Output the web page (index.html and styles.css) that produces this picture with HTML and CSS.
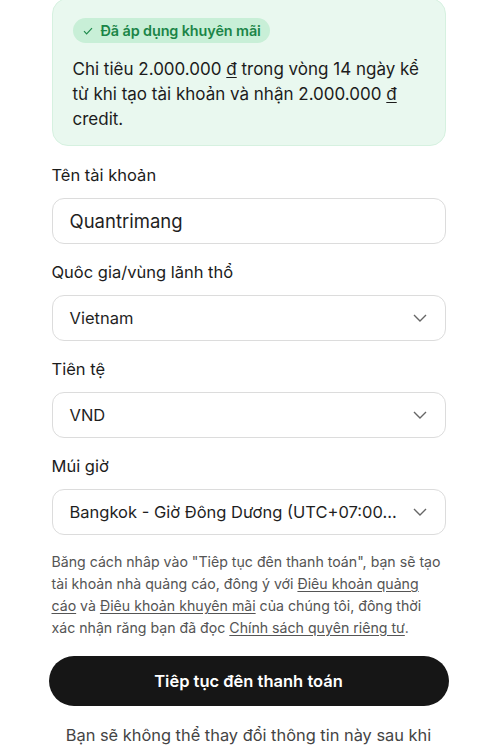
FILE: index.html
```html
<!DOCTYPE html>
<html lang="vi">
<head>
<meta charset="utf-8">
<link rel="stylesheet" href="styles.css">
</head>
<body>
<div class="page">
  <div class="promo">
    <span class="badge"><svg class="check" viewBox="0 0 10 8" width="10" height="8"><path d="M1 4.2 L3.6 6.8 L9 1.2" fill="none" stroke="#1f8a4c" stroke-width="1.2"/></svg>Đã áp dụng khuyên mãi</span>
    <p class="promo-text">Chi tiêu 2.000.000 <u>đ</u> trong vòng 14 ngày kể từ khi tạo tài khoản và nhận 2.000.000 <u>đ</u> credit.</p>
  </div>

  <div class="field">
    <div class="label">Tên tài khoản</div>
    <div class="input input-text">Quantrimang</div>
  </div>
  <div class="field">
    <div class="label">Quôc gia/vùng lãnh thổ</div>
    <div class="input select"><span class="val">Vietnam</span><svg class="chev" viewBox="0 0 14 8" width="14" height="8"><path d="M1 1 L7 7 L13 1" fill="none" stroke="#666" stroke-width="1.4"/></svg></div>
  </div>
  <div class="field">
    <div class="label">Tiên tệ</div>
    <div class="input select"><span class="val">VND</span><svg class="chev" viewBox="0 0 14 8" width="14" height="8"><path d="M1 1 L7 7 L13 1" fill="none" stroke="#666" stroke-width="1.4"/></svg></div>
  </div>
  <div class="field">
    <div class="label">Múi giờ</div>
    <div class="input select"><span class="val">Bangkok - Giờ Đông Dương (UTC+07:00...</span><svg class="chev" viewBox="0 0 14 8" width="14" height="8"><path d="M1 1 L7 7 L13 1" fill="none" stroke="#666" stroke-width="1.4"/></svg></div>
  </div>

  <p class="terms">Băng cách nhâp vào "Tiêp tục đên thanh toán", bạn sẽ tạo tài khoản nhà quảng cáo, đông ý với <a href="#">Điêu khoản quảng cáo</a> và <a href="#">Điêu khoản khuyên mãi</a> của chúng tôi, đông thời xác nhận răng bạn đã đọc <a href="#">Chính sách quyên riêng tư</a>.</p>

  <button class="btn">Tiêp tục đên thanh toán</button>

  <p class="note">Bạn sẽ không thể thay đổi thông tin này sau khi</p>
</div>
</body>
</html>
```

FILE: styles.css
```css
* { box-sizing: border-box; }
html, body { margin: 0; padding: 0; background: #fff; }
body {
  font-family: Inter, "Noto Sans", "Liberation Sans", sans-serif;
  color: #1c1c1c;
  overflow: hidden;
}
.page {
  width: 394px;
  margin: -2px auto 0;
  display: flex;
  flex-direction: column;
}
.promo {
  background: #e9f8ef;
  border: 1px solid #d6f1e0;
  border-radius: 16px;
  padding: 19px 20px 13px;
}
.badge {
  display: inline-flex;
  align-items: center;
  height: 25px;
  padding: 0 9px 0 10px;
  background: #c8efd7;
  border-radius: 13px;
  color: #1b8547;
  font-weight: 600;
  font-size: 14.4px;
  letter-spacing: -0.1px;
}
.check { margin-right: 8px; }
.promo-text {
  margin: 14px 0 0;
  font-size: 17px;
  line-height: 25px;
  color: #1c1c1c;
}
.promo-text u { text-underline-offset: 2px; }
.field {
  display: flex;
  flex-direction: column;
  margin-top: 16px;
}
.promo + .field { margin-top: 17px; }
.label {
  font-size: 16.5px;
  line-height: 24px;
  color: #1c1c1c;
  margin-bottom: 11px;
}
.input {
  height: 46px;
  border: 1px solid #dcdcdc;
  border-radius: 12px;
  padding: 0 17px;
  display: flex;
  align-items: center;
  color: #1f1f1f;
}
.input-text { font-size: 18.5px; }
.select { font-size: 16.5px; justify-content: space-between; }
.chev { margin-right: 1px; }
.terms {
  margin: 16px 0 0;
  font-size: 14.15px;
  line-height: 22px;
  color: #555;
}
.terms a { color: #555; text-decoration: underline; text-underline-offset: 2px; }
.btn {
  margin: 17px -3px 0 -3px;
  height: 50px;
  border: none;
  border-radius: 25px;
  background: #161616;
  color: #fff;
  font-family: inherit;
  font-size: 16.5px;
  font-weight: 600;
}
.note {
  margin: 17px 0 0;
  text-align: center;
  font-size: 16.4px;
  line-height: 24px;
  color: #444;
}
```
